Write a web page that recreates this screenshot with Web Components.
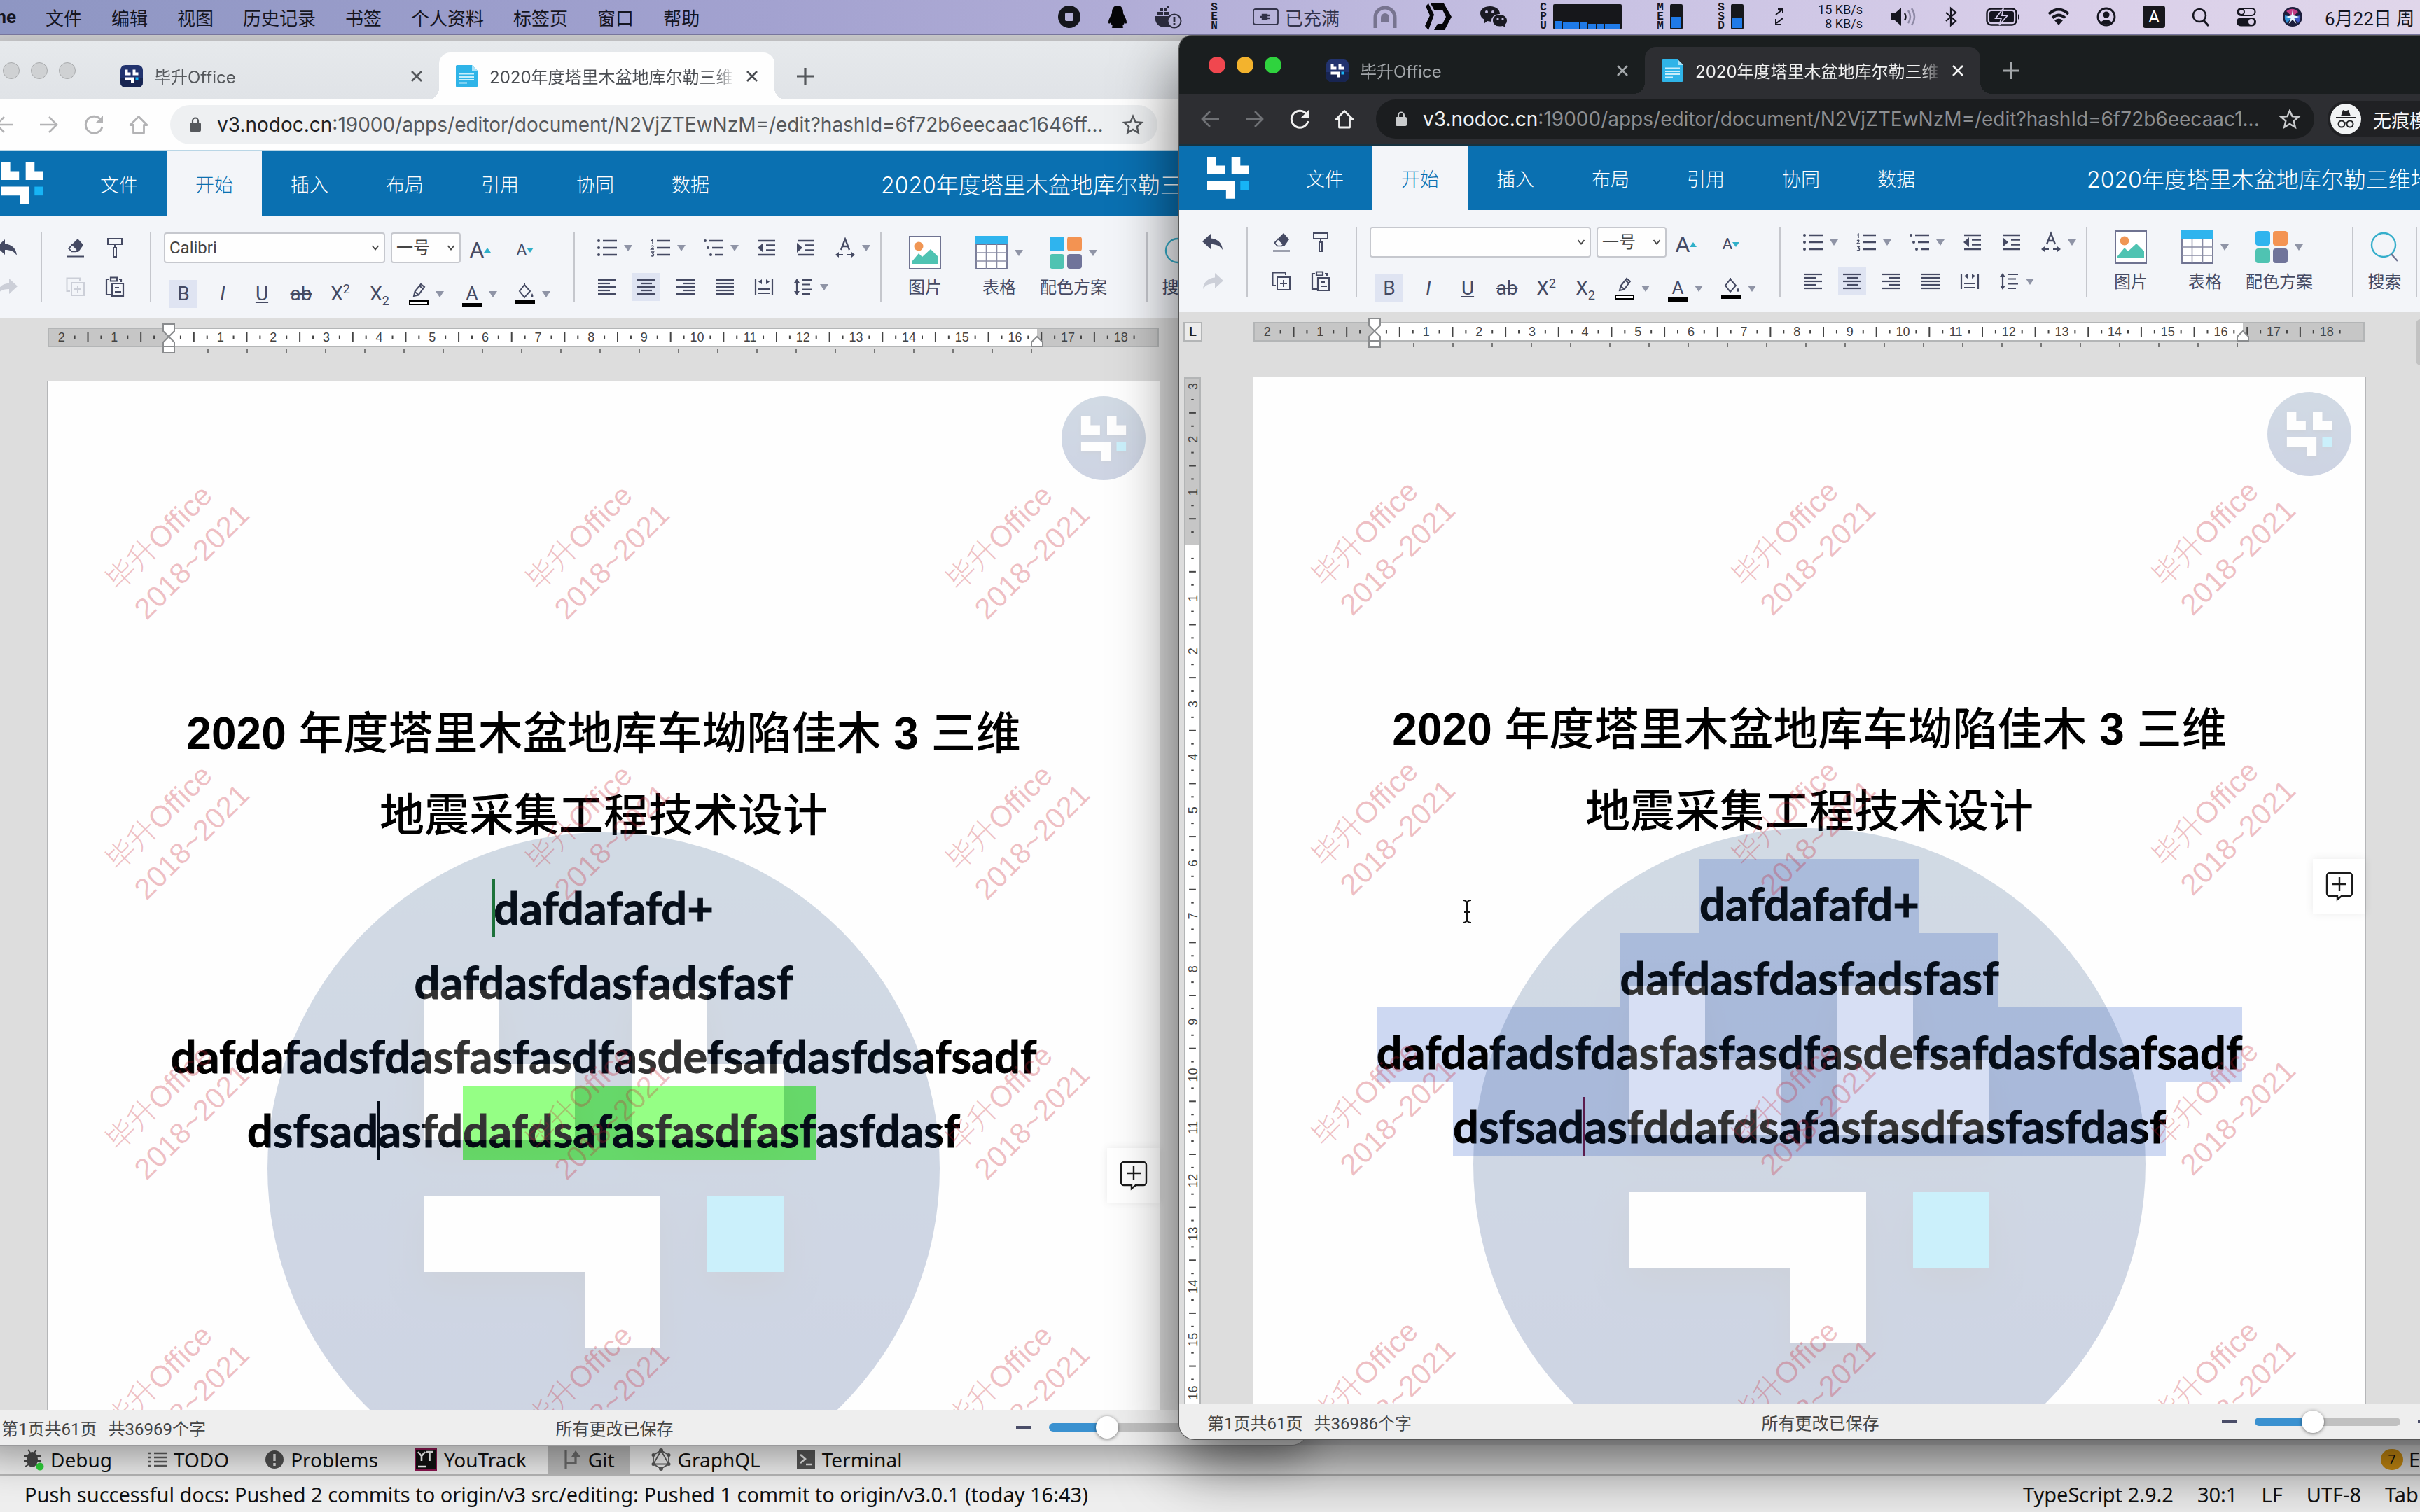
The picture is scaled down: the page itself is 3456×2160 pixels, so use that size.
<!DOCTYPE html>
<html lang="zh-CN">
<head>
<meta charset="utf-8">
<title>毕升Office</title>
<style>
html,body{margin:0;height:100%;overflow:hidden}
body{font-family:Roboto,"Noto Sans CJK SC",sans-serif}
</style>
</head>
<body>
<mac-desktop>
  <mac-menubar slot="menu"></mac-menubar>
  <browser-window slot="windows" class="back" theme="light" rest=":19000/apps/editor/document/N2VjZTEwNzM=/edit?hashId=6f72b6eecaac1646ff...">
    <office-editor font="Calibri" words="共36969个字" nocopy>
      <doc-title><b>2020</b> 年度塔里木盆地库车坳陷佳木 <b>3</b> 三维<br>地震采集工程技术设计</doc-title>
      <doc-line><text-caret tone="green"></text-caret>dafdafafd+</doc-line>
      <doc-line>dafdasfdasfadsfasf</doc-line>
      <doc-line>dafdafadsfdasfasfasdfasdefsafdasfdsafsadf</doc-line>
      <doc-line>dsfsad<text-caret></text-caret>asfd<mark-run>dafdsafasfasdfasf</mark-run>asfdasf</doc-line>
    </office-editor>
  </browser-window>
  <browser-window slot="windows" class="front" theme="dark" rest=":19000/apps/editor/document/N2VjZTEwNzM=/edit?hashId=6f72b6eecaac1...">
    <office-editor font="" words="共36986个字" pointer>
      <doc-title><b>2020</b> 年度塔里木盆地库车坳陷佳木 <b>3</b> 三维<br>地震采集工程技术设计</doc-title>
      <doc-line selected>dafdafafd+</doc-line>
      <doc-line selected>dafdasfdasfadsfasf</doc-line>
      <doc-line selected>dafdafadsfdasfasfasdfasdefsafdasfdsafsadf</doc-line>
      <doc-line selected>dsfsad<text-caret tone="wine"></text-caret>asfddafdsafasfasdfasfasfdasf</doc-line>
    </office-editor>
  </browser-window>
  <ide-footer slot="footer"></ide-footer>
</mac-desktop>

<script>
const define = (name, html, setup) => {
  const t = document.createElement('template');
  t.innerHTML = html;
  customElements.define(name, class extends HTMLElement {
    connectedCallback() {
      if (this.shadowRoot) return;
      this.attachShadow({mode: 'open'}).append(t.content.cloneNode(true));
      if (setup) setup(this, this.shadowRoot);
    }
  });
};

/* ---------- icons: [width, height, markup] ---------- */
const LOGO = '<path fill="#fff" d="M0 0h108v106h108v108H0zM297 0h108v106h109v108H297zM0 295h338v216H230V403H0z"/>';
const S = 'fill="none" stroke="currentColor"';
const lines = (x, w) => w.map((v, i) => `<path d="M${x[i]} ${2 + i * 5}h${v}" ${S} stroke-width="2.200"/>`).join('');
const ICONS = {
  logo: [60, 60, `<svg viewBox="0 0 514 512" width="60" height="60">${LOGO}<path fill="#17b4f5" d="M405 295h109v108H405z"/></svg>`],
  favicon: [32, 32, `<rect width="32" height="32" rx="7" fill="#22336e"/><path d="M0 18h32v7a7 7 0 0 1-7 7H7a7 7 0 0 1-7-7z" fill="#182552"/><g transform="translate(6.5 6.5) scale(.037)">${LOGO}<path fill="#17b4f5" d="M405 295h109v108H405z"/></g>`],
  doc: [32, 32, '<path d="M2 0h21l8 8v22a2 2 0 0 1-2 2H2a2 2 0 0 1-2-2V2a2 2 0 0 1 2-2z" fill="#2fb4e8"/><path d="M23 0l8 8h-8z" fill="#a9e2f8"/><path d="M5 12.500h21M5 17h21M5 21h21M5 25.500h11" stroke="#c9eefb" stroke-width="1.800"/>'],
  close: [20, 20, `<path d="M3 3l14 14M17 3L3 17" ${S} stroke-width="2.600"/>`],
  plus: [24, 24, `<path d="M12 0v24M0 12h24" ${S} stroke-width="3.200"/>`],
  back: [28, 28, `<path d="M27 14H3M14 3L3 14l11 11" ${S} stroke-width="2.600"/>`],
  fwd: [28, 28, `<path d="M1 14h24M14 3l11 11-11 11" ${S} stroke-width="2.600"/>`],
  reload: [28, 28, `<path d="M24 7A12 12 0 1 0 26 17" ${S} stroke-width="3"/><path d="M27 1v11H16z" fill="currentColor"/>`],
  home: [28, 28, `<path d="M14 2.500L2 14.500h4.500V26h15V14.500H26z" ${S} stroke-width="2.800" stroke-linejoin="round"/>`],
  lock: [18, 22, `<rect x="1" y="8" width="16" height="13" rx="2" fill="currentColor"/><path d="M5 9V5.500a4 4 0 0 1 8 0V9" ${S} stroke-width="2.200"/>`],
  star: [30, 30, `<path d="M15 3l3.600 8.200 8.900.8-6.800 5.900 2.100 8.800L15 22l-7.800 4.700 2.100-8.800L2.500 12l8.900-.8z" ${S} stroke-width="2.400"/>`],
  incognito: [44, 44, '<circle cx="22" cy="22" r="22" fill="#f1f3f4"/><path d="M15 18l3-9 4 1.500L26 9l3 9z" fill="#202124"/><path d="M8 20h28" stroke="#202124" stroke-width="2"/><circle cx="16" cy="29" r="4.500" fill="none" stroke="#202124" stroke-width="2"/><circle cx="28" cy="29" r="4.500" fill="none" stroke="#202124" stroke-width="2"/><path d="M20 28q2-1.500 4 0" fill="none" stroke="#202124" stroke-width="2"/>'],
  undo: [30, 24, '<path d="M12 0v6.500c10 1 16 6 17 16.500-4-6-9-8-17-8V22L0 11z" fill="currentColor"/>'],
  redo: [30, 24, '<path d="M18 0v6.500C8 7.500 2 12.500 1 23c4-6 9-8 17-8V22l12-11z" fill="currentColor"/>'],
  eraser: [28, 28, `<path d="M17 1l8 9-7 10H8l-5-5z" fill="currentColor"/><path d="M9 9.500L4.500 15.200 8.500 19.500h6l2-2.500z" fill="#f3f5f9" stroke="currentColor" stroke-width="1.600"/><path d="M2 26.500h24" ${S} stroke-width="2"/>`],
  painter: [24, 30, `<path d="M2 2h20v8H2zM10 15h4v13h-4zM12 10v5" ${S} stroke-width="2"/>`],
  copy: [28, 28, `<path d="M20 5V1.500H1.500V20H6" ${S} stroke-width="2"/><path d="M8 8h18v18H8zM17 12v10M12 17h10" ${S} stroke-width="2"/>`],
  paste: [28, 30, `<path d="M6 4H2v22h7M20 4h3v4M8 1.500h9v5H8z" ${S} stroke-width="2.200"/><path d="M10 10h16v18H10zM14 16h6M14 22h9" ${S} stroke-width="2.200"/>`],
  up: [10, 7, '<path d="M5 0l5 7H0z" fill="#2fb0c9"/>'],
  down: [10, 7, '<path d="M0 0h10L5 7z" fill="#2fb0c9"/>'],
  arrow: [12, 9, '<path d="M0 0h12L6 9z" fill="#8f94a6"/>'],
  chev: [12, 10, '<path d="M1.500 2L6 7.500 10.500 2" fill="none" stroke="#444" stroke-width="1.800"/>'],
  pen: [28, 34, `<path d="M7 20l1.500-6.500L17 3l5 4-8.500 11.500zM8.500 14l5 4M15 5.500l5 4" ${S} stroke-width="2"/><path d="M1 27h26v5H1z" fill="#fff" stroke="#000" stroke-width="2"/>`],
  fill: [28, 34, `<path d="M13 4l8 9-8 9-7-9zM13 4v-2" ${S} stroke-width="2"/><path d="M24 16q3 5 0 6-3-1 0-6z" fill="currentColor"/><path d="M0 26h28v6H0z"/>`],
  ul: [28, 24, `<g fill="currentColor"><circle cx="2" cy="2" r="2"/><circle cx="2" cy="12" r="2"/><circle cx="2" cy="22" r="2"/></g><path d="M8 2h20M8 12h20M8 22h20" ${S} stroke-width="2.400"/>`],
  ol: [28, 26, `<path d="M1 3l2-1.500V7M1 11q2.500-2 3 0 0 1.500-3 4h4M1 19h3.500L3 21.500q2.500 1 1 3-2 1-3 0" ${S} stroke-width="1.400"/><path d="M9 3h19M9 13h19M9 23h19" ${S} stroke-width="2.400"/>`],
  ml: [28, 24, `<g fill="currentColor"><circle cx="2" cy="2" r="2"/><circle cx="6" cy="12" r="2"/><circle cx="10" cy="22" r="2"/></g><path d="M8 2h20M12 12h16M16 22h12" ${S} stroke-width="2.400"/>`],
  outdent: [26, 24, `<path d="M1 2h24M12 8.500h13M12 15.500h13M1 22h24" ${S} stroke-width="2.400"/><path d="M8 5v14L0 12z" fill="currentColor"/>`],
  indent: [26, 24, `<path d="M1 2h24M12 8.500h13M12 15.500h13M1 22h24" ${S} stroke-width="2.400"/><path d="M0 5v14l8-7z" fill="currentColor"/>`],
  scale: [28, 28, `<path d="M8 17L14 1.500 20 17M10 12h8" ${S} stroke-width="2.400"/><path d="M3 24h8M17 24h8" ${S} stroke-width="2"/><path d="M5 20v8l-5-4zM23 20v8l5-4z" fill="currentColor"/>`],
  al: [26, 24, lines([0, 0, 0, 0, 0], [26, 17, 26, 17, 26])],
  ac: [26, 24, lines([0, 5, 0, 5, 0], [26, 16, 26, 16, 26])],
  ar: [26, 24, lines([0, 9, 0, 9, 0], [26, 17, 26, 17, 26])],
  aj: [26, 24, lines([0, 0, 0, 0, 0], [26, 26, 26, 26, 26])],
  dist: [26, 24, `<path d="M1 1v22M25 1v22M5 15h16M5 21h16" ${S} stroke-width="2.200"/><path d="M10 1v7L5 4.500zM16 1v7l5-3.500z" fill="currentColor"/>`],
  spacing: [26, 24, `<path d="M12 2h14M12 8.500h11M12 15.500h14M12 22h11M4 3v18" ${S} stroke-width="2.200"/><path d="M0 6l4-6 4 6zM0 18l4 6 4-6z" fill="currentColor"/>`],
  picture: [46, 48, '<path d="M1 1h44v46H1z" fill="#fff" stroke="#6f7391" stroke-width="2"/><circle cx="14" cy="15" r="6.500" fill="#f09654"/><path d="M4 40V37l10-12 5 5L31 19l11 11v10z" fill="#4fc3b2"/>'],
  table: [46, 48, '<path d="M1 12h44v35H1z" fill="#fff" stroke="#6f7391" stroke-width="1.800"/><path d="M15.500 12v35M30.500 12v35M1 24h44M1 36h44" stroke="#8a8da5" stroke-width="1.600"/><path d="M0 0h46v12H0z" fill="#2fb4ee"/>'],
  colors: [46, 48, '<rect y="1" width="21" height="21" rx="4" fill="#2fb4ee"/><rect x="25" y="1" width="21" height="21" rx="4" fill="#f39352"/><rect y="26" width="21" height="21" rx="4" fill="#4fc3b2"/><rect x="25" y="26" width="21" height="21" rx="4" fill="#70749a"/>'],
  find: [42, 48, '<circle cx="19" cy="21" r="17" fill="none" stroke="#35aecb" stroke-width="2.400"/><path d="M30 34l9 10" stroke="#6f7391" stroke-width="2.400"/>'],
  comment: [40, 42, '<path d="M6 2h28a4 4 0 0 1 4 4v25a4 4 0 0 1-4 4H23l-6 5v-5H6a4 4 0 0 1-4-4V6a4 4 0 0 1 4-4z" fill="#fff" stroke="#1b1b1b" stroke-width="2.400"/><path d="M20 8v20M10 18h20" stroke="#1b1b1b" stroke-width="2.400"/>'],
  ibeam: [18, 36, '<path d="M3 2q6 0 6 5 0-5 6-5M9 6v24M3 34q6 0 6-5 0 5 6 5M5 19h8" fill="none" stroke="#111" stroke-width="2"/>'],
  /* menu bar */
  rec: [32, 32, '<circle cx="16" cy="16" r="16" fill="#15161c"/><rect x="10" y="10" width="12" height="12" rx="2" fill="#b4b0d6"/>'],
  qq: [26, 32, '<path d="M13 0c6 0 8 5 8 10 0 3 5 8 5 14 0 2-2 2-3 0-1 3-2 4-3 5 2 1 2 3-1 3h-12c-3 0-3-2-1-3-1-1-2-2-3-5-1 2-3 2-3 0 0-6 5-11 5-14C5 5 7 0 13 0z" fill="#050507"/>'],
  docker: [38, 34, '<g fill="#2a2a3c"><path d="M3 10h4v4H3zM8 10h4v4H8zM13 10h4v4h-4zM8 5h4v4H8zM13 5h4v4h-4zM18 10h3v4h-3zM17 1h3v4h-3z"/><path d="M0 16h20q5 0 7-3v16q-4 3-12 3-14 0-15-16z"/></g><circle cx="28" cy="23" r="9.500" fill="#b4b0d6" stroke="#2a2a3c" stroke-width="2"/><path d="M28 17v7M28 26v3" stroke="#2a2a3c" stroke-width="2.800"/>'],
  plug: [38, 24, `<rect x="1" y="1" width="35" height="22" rx="3" ${S} stroke-width="1.800"/><path d="M37 8q2 4 0 8z" fill="currentColor"/><path d="M14 9h6v6h-6zM10 12h5M20 10h4M20 14h4" fill="currentColor" stroke="currentColor" stroke-width="2.400"/>`],
  arch: [34, 32, '<path d="M3 32V17a14 14 0 0 1 28 0v15" fill="none" stroke="#77748f" stroke-width="5"/><path d="M11 24V17a6 6 0 0 1 12 0v7z" fill="#77748f"/>'],
  dd: [38, 38, '<path d="M1 4l4-4 8 16L5 38l-5-6 7-15zM8 0h19l11 19-10 19H13l5-9h7l5-10-5-10H13z" fill="#060608"/>'],
  wechat: [40, 32, '<path d="M15 1c9 0 14 5 14 11-8 0-13 5-12 11l-6-1-5 4 1-6C3 18 1 15 1 11 1 5 7 1 15 1z" fill="#1a1a22"/><path d="M29 13c6 0 10 4 10 8 0 3-1 5-3 6l1 4-4-2c-9 2-14-2-14-8 0-5 4-8 10-8z" fill="#1a1a22"/><g fill="#c3bde0"><circle cx="10" cy="9" r="2"/><circle cx="19" cy="9" r="2"/><circle cx="26" cy="19" r="1.600"/><circle cx="33" cy="19" r="1.600"/></g>'],
  cpu: [98, 36, '<rect width="98" height="36" rx="2" fill="#16171b"/><path d="M2 24h11v11H2zM14 26h11v9H14zM26 26h11v9H26zM38 26h11v9H38zM50 28h11v7H50zM62 28h11v7H62zM74 28h11v7H74zM86 28h10v7H86z" fill="#1f7ae8"/>'],
  mem: [18, 36, '<rect width="18" height="36" rx="2" fill="#16171b"/><path d="M2 18h14v16H2z" fill="#1f7ae8"/>'],
  ssd: [18, 36, '<rect width="18" height="36" rx="2" fill="#16171b"/><path d="M2 20h14v14H2z" fill="#1f7ae8"/>'],
  net: [14, 24, `<path d="M2 9L11 2M5 1h7v6M12 14l-9 7M2 15v8h7" ${S} stroke-width="2"/>`],
  vol: [36, 28, `<path d="M0 9h6l9-8v26l-9-8H0z" fill="currentColor"/><path d="M20 9q3 5 0 10" ${S} stroke-width="2.400"/><path d="M25 5q6 9 0 18M30 2q8 12 0 24" fill="none" stroke="#8f8aa6" stroke-width="2.400"/>`],
  bt: [20, 28, `<path d="M3 8l14 12-7 6V2l7 6L3 20" ${S} stroke-width="2.200"/>`],
  bat: [50, 26, `<rect x="1.500" y="1.500" width="42" height="23" rx="6" ${S} stroke-width="2.400"/><rect x="5" y="5" width="35" height="16" rx="3" fill="currentColor"/><path d="M46 9q4 4 0 8z" fill="currentColor"/><path d="M25 1L14 15h8l-3 10 12-14h-8z" fill="currentColor" stroke="#d3cae7" stroke-width="1.800"/>`],
  wifi: [32, 26, `<path d="M2 9q14-13 28 0M7 14.500q9-8 18 0" ${S} stroke-width="4"/><path d="M10 18q6-5 12 0l-6 7z" fill="currentColor"/>`],
  user: [28, 28, `<circle cx="14" cy="14" r="12" ${S} stroke-width="2.800"/><circle cx="14" cy="11" r="4.600" fill="currentColor"/><path d="M6 22q8-8 16 0-8 6-16 0z" fill="currentColor"/>`],
  mag: [26, 28, `<circle cx="11" cy="12" r="9" ${S} stroke-width="2.600"/><path d="M17 19l7 8" ${S} stroke-width="3"/>`],
  ctrl: [28, 28, `<rect x="1.500" y="2" width="25" height="10" rx="5" ${S} stroke-width="2.200"/><circle cx="7" cy="7" r="4" ${S} stroke-width="2"/><rect y="15" width="28" height="12.500" rx="6" fill="currentColor"/><circle cx="21" cy="21" r="4" fill="#dcd2ea"/>`],
  siri: [28, 28, '<circle cx="14" cy="14" r="14" fill="#1c1d3b"/><path d="M5 6q9-7 17 1l-8 7z" fill="#c23d86"/><path d="M3 12l11 2-8 9q-4-5-3-11z" fill="#2f8fd6"/><path d="M25 12l-11 2 8 9q4-5 3-11z" fill="#3c56c4"/><path d="M14 4l1.500 8 8 2-7 2 3 8-5.500-6-5.500 6 3-8-7-2 8-2z" fill="#eaf6ff"/>'],
  /* IDE */
  bug: [28, 32, '<g fill="none" stroke="#4a4a4a" stroke-width="2"><path d="M6 2l3 4M18 2l-3 4M0 11h24M0 18h24M2 26l5-3M22 26l-5-3"/></g><ellipse cx="12" cy="16" rx="8" ry="11" fill="#4a4a4a"/><circle cx="23" cy="26" r="5.500" fill="#2fd33a"/>'],
  todo: [26, 22, '<path d="M0 2h4M8 2h18M0 8h4M8 8h18M0 14h4M8 14h18M0 20h4M8 20h18" stroke="#5e5e5e" stroke-width="2.600"/>'],
  prob: [26, 26, '<circle cx="13" cy="13" r="13" fill="#505050"/><path d="M13 5v10M13 18v4" stroke="#ddd" stroke-width="3.400"/>'],
  yt: [32, 32, '<rect x="1" y="1" width="30" height="30" fill="#111" stroke="#8c1650" stroke-width="2"/><path d="M5 5l5 6 5-6M10 11v7M16 5h11M21.500 5v13M5 26h11" fill="none" stroke="#fff" stroke-width="2.600"/>'],
  git: [26, 28, '<path d="M4 1v26M4 19h14V8" fill="none" stroke="#6b6b6b" stroke-width="3.200"/><path d="M12 10l6-9 7 9z" fill="#6b6b6b"/>'],
  gql: [28, 32, '<g fill="none" stroke="#5a5a5a" stroke-width="1.800"><path d="M14 3l11 6.500v13L14 29 3 22.500v-13zM14 3L3 22.500h22z"/></g><g fill="#5a5a5a"><circle cx="14" cy="3" r="3"/><circle cx="25" cy="9.500" r="2.500"/><circle cx="25" cy="22.500" r="2.500"/><circle cx="14" cy="29" r="3"/><circle cx="3" cy="22.500" r="2.500"/><circle cx="3" cy="9.500" r="2.500"/></g>'],
  term: [26, 26, '<path d="M0 0h26v26H0z" fill="#555"/><path d="M5 6l7 6-7 6M13 20h9" fill="none" stroke="#e4e4e4" stroke-width="2.600"/>']
};
define('ui-icon', '<style>:host{display:inline-flex;flex:none}svg{display:block;overflow:visible}</style>', (el, root) => {
  const [w, h, body] = ICONS[el.getAttribute('name')];
  root.innerHTML += `<svg width="${w}" height="${h}" viewBox="0 0 ${w} ${h}" aria-hidden="true">${body}</svg>`;
});

/* ---------- desktop ---------- */
define('mac-desktop', `<style>
:host{display:flex;flex-direction:column;position:relative;height:100vh;overflow:hidden;background:#d6d6d8}
main{flex:1}
::slotted(.back),::slotted(.front){position:absolute;width:1905px}
::slotted(.back){left:-38px;top:59px;bottom:96px;--page-gap:91px;--note-top:1186px;box-shadow:0 0 0 1px #9a9a9c,0 16px 60px rgba(0,0,0,.4)}
::slotted(.front){left:1684px;top:51px;bottom:104px;--page-gap:93px;--note-top:781px;box-shadow:0 0 0 1px #555,0 36px 90px rgba(0,0,0,.6)}
</style><slot name="menu"></slot><main></main><slot name="footer"></slot><slot name="windows"></slot>`);

define('mac-menubar', `<style>
:host{display:block;flex:none;position:relative;z-index:2}
nav{display:flex;align-items:center;height:48px;font-size:26px;color:#15151f;border-bottom:2px solid #77759c;
 background:linear-gradient(90deg,#8e96c3 0%,#a3a2d0 32%,#b0acd6 46%,#c6c0e2 64%,#d8cee9 84%,#e0d6ea 100%)}
.app{width:23px;display:flex;justify-content:flex-end;overflow:hidden;font-weight:700}
ul{display:flex;gap:42px;margin:0;padding:0 0 0 42px;list-style:none}
.right{margin-left:auto;display:flex;gap:40px;align-items:center}
.v{display:flex;gap:7px;align-items:center}
.g{margin:0 4px}
.v span{font:700 16px/13px "Liberation Mono",monospace;width:14px;display:flex;flex-direction:column;align-items:center}
.charge{display:flex;align-items:center;gap:8px;padding:0 8px;color:#33334a}
.kb{font-size:18px;line-height:20px;text-align:right;width:72px}
.end{display:flex;gap:38px;align-items:center}
.a{width:32px;height:32px;border-radius:4px;background:#17171c;color:#fff;display:grid;place-items:center;font-size:24px}
time{width:136px;white-space:nowrap;overflow:hidden;margin-left:-6px}
</style><nav><span class="app">Chrome</span>
<ul><li>文件</li><li>编辑</li><li>视图</li><li>历史记录</li><li>书签</li><li>个人资料</li><li>标签页</li><li>窗口</li><li>帮助</li></ul>
<div class="right"><ui-icon name="rec"></ui-icon><ui-icon name="qq"></ui-icon><ui-icon name="docker"></ui-icon>
<div class="v"><span><b>S</b><b>E</b><b>N</b></span></div>
<div class="charge"><ui-icon name="plug"></ui-icon>已充满</div><ui-icon name="arch"></ui-icon><ui-icon name="dd"></ui-icon><ui-icon name="wechat"></ui-icon>
<div class="v g"><span><b>C</b><b>P</b><b>U</b></span><ui-icon name="cpu"></ui-icon></div>
<div class="v g"><span><b>M</b><b>E</b><b>M</b></span><ui-icon name="mem"></ui-icon></div>
<div class="v g"><span><b>S</b><b>S</b><b>D</b></span><ui-icon name="ssd"></ui-icon></div>
<ui-icon name="net"></ui-icon><div class="kb">15 KB/s<br>8 KB/s</div><ui-icon name="vol"></ui-icon><ui-icon name="bt"></ui-icon>
<div class="end"><ui-icon name="bat"></ui-icon><ui-icon name="wifi"></ui-icon><ui-icon name="user"></ui-icon><span class="a">A</span><ui-icon name="mag"></ui-icon><ui-icon name="ctrl"></ui-icon><ui-icon name="siri"></ui-icon><time>6月22日 周</time></div>
</div></nav>`);

/* ---------- browser ---------- */
define('browser-tab', `<style>
:host{display:flex;align-items:center;box-sizing:border-box;width:479px;height:67px;padding:0 22px 0 24px;position:relative;color:var(--tab-ink);font:24px Inter,"Noto Sans CJK SC",sans-serif}
:host([active]){background:var(--bar);border-radius:16px 16px 0 0;color:var(--tab-on)}
:host([active])::before,:host([active])::after{content:"";position:absolute;bottom:0;width:16px;height:16px}
:host([active])::before{left:-16px;background:radial-gradient(circle at 0 0,transparent 16px,var(--bar) 16px)}
:host([active])::after{right:-16px;background:radial-gradient(circle at 100% 0,transparent 16px,var(--bar) 16px)}
.t{flex:1;margin:0 8px 0 16px;white-space:nowrap;overflow:hidden;-webkit-mask:linear-gradient(90deg,#000 320px,transparent 352px);mask:linear-gradient(90deg,#000 320px,transparent 352px)}
button{border:0;background:none;padding:0;color:inherit;display:flex}
</style><slot name="icon"></slot><span class="t"><slot></slot></span><button aria-label="关闭"><ui-icon name="close"></ui-icon></button>`);

define('browser-window', `<style>
:host{display:flex;flex-direction:column;border-radius:18px 18px 22px 22px;overflow:hidden;
 --strip:linear-gradient(#e6e9ec,#e0e3e7);--bar:#fefefe;--pill:#eef0f2;--ink:#202124;--dim:#55585c;--nav:#b3b3b5;--nav2:#b3b3b5;--star:#55585c;--tab-ink:#55585c;--tab-on:#4a4d52;--line:#b9d6e6;--l1:#cfd1d3;--l2:#cfd1d3;--l3:#cfd1d3;--rim:#a9abad}
:host([theme=dark]){--strip:#1a1e1f;--bar:#2d2e32;--pill:#1b1d1f;--ink:#f1f1f1;--dim:#8c8e91;--nav:#6f7175;--nav2:#f0f0f0;--star:#c9cbcd;--tab-ink:#a3a7aa;--tab-on:#f1f1f1;--line:#17323f;--l1:#f0474f;--l2:#f3b32d;--l3:#2fd33e;--rim:transparent}
.strip{display:flex;align-items:center;height:83px;background:var(--strip);flex:none}
.lights{width:186px;box-sizing:border-box;padding-left:42px;display:flex;gap:16px}
.lights button{width:24px;height:24px;box-sizing:border-box;border-radius:50%;border:1px solid var(--rim);padding:0}
.tabs{display:flex;align-self:flex-end}
.add{align-self:flex-end;height:67px;align-items:center;margin-left:32px;color:var(--tab-ink);display:flex;border:0;background:none;padding:0}
.bar{display:flex;align-items:center;height:72px;flex:none;background:var(--bar);border-bottom:2px solid var(--line);padding-left:30px}
.nav{display:flex;gap:36px;color:var(--nav)}
.nav button,.pill button{display:flex;border:0;background:none;padding:0;color:inherit}
.nav button:nth-child(n+3){color:var(--nav2)}
.pill{flex:1;display:flex;align-items:center;height:56px;border-radius:28px;background:var(--pill);margin:0 214px 0 31px;padding:0 20px 0 27px;font:28px Inter,sans-serif;color:var(--dim);min-width:0}
:host([theme=dark]) .pill{margin-right:19px}
label{color:var(--ink);margin-left:22px}
input{flex:1;min-width:0;font:inherit;color:inherit;border:0;background:none;padding:0;outline:0}
.pill ui-icon{color:var(--star)}
.chip{display:none;align-items:center;gap:17px;width:265px;height:52px;border-radius:26px;box-sizing:border-box;padding-left:4px;background:#202124;color:#f5f5f5;font-size:26px}
:host([theme=dark]) .chip{display:flex}
</style>
<div class="strip"><div class="lights"><button aria-label="关闭" style="background:var(--l1)"></button><button aria-label="最小化" style="background:var(--l2)"></button><button aria-label="缩放" style="background:var(--l3)"></button></div>
<div class="tabs"><browser-tab><ui-icon slot="icon" name="favicon"></ui-icon>毕升Office</browser-tab><browser-tab active><ui-icon slot="icon" name="doc"></ui-icon>2020年度塔里木盆地库尔勒三维</browser-tab></div>
<button class="add" aria-label="新标签页"><ui-icon name="plus"></ui-icon></button></div>
<div class="bar"><div class="nav"><button aria-label="后退"><ui-icon name="back"></ui-icon></button><button aria-label="前进"><ui-icon name="fwd"></ui-icon></button><button aria-label="刷新"><ui-icon name="reload"></ui-icon></button><button aria-label="主页"><ui-icon name="home"></ui-icon></button></div>
<div class="pill"><ui-icon name="lock"></ui-icon><label for="u">v3.nodoc.cn</label><input id="u"><button aria-label="收藏"><ui-icon name="star"></ui-icon></button></div>
<div class="chip"><ui-icon name="incognito"></ui-icon>无痕模式</div></div>
<slot></slot>`, (el, root) => { root.querySelector('input').setAttribute('value', el.getAttribute('rest')); });

/* ---------- ribbon parts ---------- */
define('tool-button', `<style>
:host{display:inline-flex;align-items:center}
button{width:40px;height:40px;border:0;padding:0;background:none;color:inherit;display:flex;align-items:center;justify-content:center;font:28px/40px Roboto,sans-serif;white-space:nowrap}
:host([on]) button{background:#dfe4f2}
:host([off]) button{color:#cccfd8}
.m{display:none;margin:0 4px}
:host([menu]) .m{display:flex}
</style><button><slot></slot></button><span class="m"><ui-icon name="arrow"></ui-icon></span>`, (el, root) => {
  const i = el.getAttribute('icon');
  if (i) root.querySelector('button').innerHTML = `<ui-icon name="${i}"></ui-icon>`;
  root.querySelector('button').setAttribute('aria-label', el.getAttribute('label') || el.textContent || i);
});

define('big-tool', `<style>
:host{display:block;width:106px;flex:none}
button{width:100%;border:0;background:none;padding:5px 0 0;color:inherit;display:flex;flex-direction:column;align-items:center;font:24px/32px "Noto Sans CJK SC",sans-serif;gap:8px;white-space:nowrap}
span{display:flex;align-items:center;gap:10px}
.m{display:none}:host([menu]) .m{display:flex}
</style><button><span><slot name="icon"></slot><span class="m"><ui-icon name="arrow"></ui-icon></span></span><slot></slot></button>`);

define('font-select', `<style>
:host{display:inline-grid;height:44px}
select,.c{grid-area:1/1}
select{appearance:none;box-sizing:border-box;width:100%;height:44px;border:2px solid #c6c8ce;border-radius:4px;background:#fefefe;padding:0 6px;font:24px Roboto,"Noto Sans CJK SC",sans-serif;color:#444}
.c{align-self:center;justify-self:end;margin-right:8px;pointer-events:none;display:flex}
</style><select><option></option></select><span class="c"><ui-icon name="chev"></ui-icon></span>`, (el, root) => {
  root.querySelector('select').setAttribute('aria-label', el.getAttribute('label'));
  root.querySelector('option').textContent = el.getAttribute('value') || '';
});

define('office-ribbon', `<style>
:host{display:flex;flex:none;box-sizing:border-box;height:146px;padding:24px 0 22px;background:#f3f5f9;color:#454a63}
section{display:flex;height:100px;box-sizing:border-box;border-left:2px solid #c5c7cd;flex:none}
.undo{width:96px;border:0;flex-direction:column;align-items:center;padding-top:2px;gap:16px}
.clip{width:156px;padding:2px 0 0 28px;display:grid;grid-template-columns:40px 40px;gap:16px;align-content:start}
.font{width:605px;padding-left:18px;flex-direction:column;gap:24px}
.para{width:438px;padding:2px 0 0 26px;flex-direction:column;gap:16px}
.ins{width:380px;padding-left:9px}
.search{width:91px;justify-content:center}.search big-tool{width:90px}
.row{display:flex;gap:16px;height:40px}
.font .row:first-child{gap:8px;height:44px}
.font .row+.row{padding-left:8px}
.pair{display:flex;gap:24px;padding-top:6px}
font-select:first-child{width:316px}font-select{width:100px}
sup,sub{font-size:18px;line-height:0}
.big{font-size:32px}.sm{font-size:22px}
.bar{border-bottom:6px solid #000;width:28px;line-height:28px;font-size:26px;margin-top:4px;text-align:center}
</style>
<section class="undo"><tool-button icon="undo"></tool-button><tool-button icon="redo" off></tool-button></section>
<section class="clip"><tool-button icon="eraser"></tool-button><tool-button icon="painter"></tool-button><tool-button class="copy" icon="copy"></tool-button><tool-button icon="paste"></tool-button></section>
<section class="font"><div class="row"><font-select class="f" label="字体"></font-select><font-select label="字号" value="一号"></font-select>
<div class="pair"><tool-button label="增大字号"><span class="big">A</span><ui-icon name="up"></ui-icon></tool-button><tool-button label="减小字号"><span class="sm">A</span><ui-icon name="down"></ui-icon></tool-button></div></div>
<div class="row"><tool-button on>B</tool-button><tool-button><i>I</i></tool-button><tool-button><u>U</u></tool-button><tool-button label="删除线"><s>ab</s></tool-button><tool-button><span>X<sup>2</sup></span></tool-button><tool-button><span>X<sub>2</sub></span></tool-button>
<tool-button icon="pen" menu></tool-button><tool-button menu label="字体颜色"><span class="bar">A</span></tool-button><tool-button icon="fill" menu></tool-button></div></section>
<section class="para"><div class="row"><tool-button icon="ul" menu></tool-button><tool-button icon="ol" menu></tool-button><tool-button icon="ml" menu></tool-button><tool-button icon="outdent"></tool-button><tool-button icon="indent"></tool-button><tool-button icon="scale" menu></tool-button></div>
<div class="row"><tool-button icon="al"></tool-button><tool-button icon="ac" on></tool-button><tool-button icon="ar"></tool-button><tool-button icon="aj"></tool-button><tool-button icon="dist"></tool-button><tool-button icon="spacing" menu></tool-button></div></section>
<section class="ins"><big-tool><ui-icon slot="icon" name="picture"></ui-icon>图片</big-tool><big-tool menu><ui-icon slot="icon" name="table"></ui-icon>表格</big-tool><big-tool menu><ui-icon slot="icon" name="colors"></ui-icon>配色方案</big-tool></section>
<section class="search"><big-tool><ui-icon slot="icon" name="find"></ui-icon>搜索</big-tool></section><section></section>`, (el, root) => {
  root.querySelector('.f').shadowRoot.querySelector('option').textContent = el.getAttribute('font') || '';
  if (el.hasAttribute('nocopy')) root.querySelector('.copy').setAttribute('off', '');
});

/* ---------- rulers ---------- */
const CM = 75.65;
const scaleMarks = (from, to, put) => {
  for (let q = Math.ceil(from * 4); q <= to * 4; q++) {
    if (q === 0) continue;
    const n = Math.abs(q);
    put(q / 4 * CM, n % 4 === 0 ? n / 4 : null, n % 2 === 0 ? 14 : 5);
  }
};
define('h-ruler', '<style>:host{display:block}svg{display:block;overflow:visible}text{font:18px "Liberation Sans",sans-serif;fill:#444}</style>', (el, root) => {
  let m = '';
  scaleMarks(-2.24, 18.3, (p, n, h) => {
    m += n !== null ? `<text x="${171 + p}" y="20" text-anchor="middle">${n}</text>` : `<path d="M${171 + p} ${14 - h / 2}v${h}" stroke="#444" stroke-width="2"/>`;
  });
  for (let i = 1; i < 23; i++) m += `<path d="M${173 + i * 56} 30v6" stroke="#777" stroke-width="2"/>`;
  root.innerHTML += `<svg width="100%" height="40"><rect width="1587" height="28" fill="#c6c6c6"/><rect x="173" width="1240" height="28" fill="#fff"/><path d="M0 1h1587M0 27h1587M1 0v28M1586 0v28" stroke="#b3b5b6" stroke-width="2"/>${m}
  <g fill="#fff" stroke="#8a8c8e" stroke-width="2"><path d="M165-5h16V5l-8 8-8-8zM165 27v-6l8-8 8 8v6zM165 27h16v9h-16zM1405 27v-6l8-8 8 8v6z"/></g></svg>`;
});
define('v-ruler', '<style>:host{display:block;overflow:hidden}svg{display:block}text{font:18px "Liberation Sans",sans-serif;fill:#444}</style>', (el, root) => {
  let m = '';
  scaleMarks(-3.05, 16.2, (p, n, h) => {
    const y = 240 + p;
    m += n !== null ? `<text transform="translate(19 ${y}) rotate(-90)" text-anchor="middle">${n}</text>` : `<path d="M${12 - h * .35} ${y}h${h * .7}" stroke="#444" stroke-width="2"/>`;
  });
  root.innerHTML += `<svg width="24" height="1480"><rect width="24" height="240" fill="#c6c6c6"/><rect y="240" width="24" height="1240" fill="#fff"/><path d="M1 0v1480M23 0v1480M0 1h24" stroke="#b3b5b6" stroke-width="2"/>${m}</svg>`;
});

/* ---------- document content ---------- */
define('doc-title', `<style>:host{display:block;text-align:center;font:500 64px/117px "Liberation Sans","Noto Sans CJK SC",sans-serif;color:#000;white-space:nowrap;margin-bottom:9px}::slotted(b){font-weight:700}</style><slot></slot>`);
define('doc-line', `<style>:host{display:block;text-align:center;height:106px;font:700 65px/86px Lato,sans-serif;color:#000;white-space:nowrap;-webkit-text-stroke:1px currentColor}
span{display:inline-block;padding-top:20px;height:86px;vertical-align:top}:host([selected]) span{background:#cdd8f2}</style><span><slot></slot></span>`);
define('mark-run', `<style>:host{display:inline-block;margin-top:-20px;padding-top:20px;background:#7aff66}</style><slot></slot>`);
define('text-caret', `<style>:host{display:inline-block;position:relative;width:0;height:0;color:#000}:host([tone=green]){color:#1d7d2a}:host([tone=wine]){color:#6d1340}
:host::before{content:"";position:absolute;left:-2px;bottom:-18px;width:4px;height:84px;background:currentColor}</style>`);

define('page-seal', `<style>:host{display:block}svg{display:block;width:100%;height:100%;opacity:.2}</style>
<svg viewBox="0 0 960 960"><defs><linearGradient id="g" x2="0" y2="1"><stop stop-color="#255082"/><stop offset="1" stop-color="#11307c"/></linearGradient></defs>
<circle cx="480" cy="480" r="480" fill="url(#g)"/><g transform="translate(223 225)" style="filter:drop-shadow(0 20px 24px rgba(0,0,0,.35))">${LOGO}<path fill="#05bdf2" d="M405 295h109v108H405z"/></g></svg>`);

define('doc-page', `<style>
:host{display:block;position:relative;box-sizing:border-box;background:#fefefe;box-shadow:0 0 0 1px #b5b6b8;padding-top:445px;height:1480px}
.over{position:absolute;inset:0;pointer-events:none;overflow:hidden}
.small{position:absolute;right:20px;top:21px;width:120px;height:120px}
.large{position:absolute;left:314px;top:644px;width:960px;height:960px}
.marks{position:absolute;left:-114px;top:37px;display:grid;grid-template-columns:repeat(3,600px);grid-auto-rows:400px;place-items:center}
.marks p{margin:0;transform:rotate(-45deg);font:300 42px/57px "Liberation Sans","Noto Sans CJK SC",sans-serif;color:rgba(200,30,50,.28);white-space:nowrap}
</style><slot></slot><div class="over"><page-seal class="small"></page-seal><page-seal class="large"></page-seal><div class="marks"></div></div>`, (el, root) => {
  root.querySelector('.marks').innerHTML = '<p>毕升Office<br>2018~2021</p>'.repeat(12);
});

define('office-editor', `<style>
:host{display:flex;flex-direction:column;flex:1;min-height:0}
header{display:flex;align-items:center;height:92px;flex:none;background:#0a70b1;color:#fff;padding-left:40px;font:300 27px Inter,"Noto Sans CJK SC",sans-serif}
nav{display:flex;margin-left:40px;height:100%}
nav a{width:136px;display:grid;place-items:center;color:#fff;text-decoration:none}
nav a.on{background:#f3f5f9;color:#0a70b1}
h1{margin:0 0 0 204px;font-weight:300;font-size:32px;white-space:nowrap;overflow:hidden}
.work{flex:1;min-height:0;overflow:hidden;position:relative;display:grid;grid-template-columns:106px 1588px 1fr;grid-template-rows:var(--page-gap) 1fr;background:#dddddd}
.corner{width:27px;height:28px;margin:14px 0 0 6px;box-sizing:border-box;border:2px solid #b3b5b6;background:#ececec;display:grid;place-items:center;font:700 18px/20px "Liberation Sans",sans-serif;color:#222}
h-ruler{margin-top:14px}
v-ruler{margin-left:7px;width:24px}
.note{position:absolute;left:1619px;top:var(--note-top);width:75px;height:78px;border:0;padding:0;background:#fff;box-shadow:0 0 12px rgba(0,0,0,.08);display:grid;place-items:center}
.thumb{position:absolute;right:125px;top:10px;width:14px;height:66px;border-radius:7px;background:#c2c2c2}
.ibeam{position:absolute;left:402px;top:838px;display:none}
:host([pointer]) .ibeam{display:block}
footer{position:relative;height:50px;flex:none;background:#eeeeee;display:grid;grid-template-columns:1fr auto 1fr;align-items:center;font-size:24px;color:#444;padding:0 114px 0 40px}
.l{display:flex;gap:16px}
.z{display:flex;align-items:center;justify-content:flex-end;gap:25px}
.z button{border:0;padding:0;width:22px;height:22px;background:linear-gradient(#4a4d68,#4a4d68) center/22px 4px no-repeat}
.z .p{background:linear-gradient(#4a4d68,#4a4d68) center/22px 4px no-repeat,linear-gradient(#4a4d68,#4a4d68) center/4px 22px no-repeat}
input{appearance:none;margin:0;width:208px;height:12px;border-radius:6px;background:linear-gradient(90deg,#3a91d0 40%,#c0c0c0 40%)}
input::-webkit-slider-thumb{appearance:none;width:32px;height:32px;border-radius:50%;background:#fff;box-shadow:0 1px 5px rgba(0,0,0,.5)}
</style>
<header><ui-icon name="logo"></ui-icon><nav><a href="#">文件</a><a href="#" class="on">开始</a><a href="#">插入</a><a href="#">布局</a><a href="#">引用</a><a href="#">协同</a><a href="#">数据</a></nav><h1>2020年度塔里木盆地库尔勒三维地</h1></header>
<office-ribbon></office-ribbon>
<div class="work"><div class="corner">L</div><h-ruler></h-ruler><div></div><v-ruler></v-ruler><doc-page><slot></slot></doc-page>
<button class="note" aria-label="批注"><ui-icon name="comment"></ui-icon></button><div class="thumb"></div><ui-icon class="ibeam" name="ibeam"></ui-icon></div>
<footer><div class="l"><span>第1页共61页</span><span class="w"></span></div><span>所有更改已保存</span><div class="z"><button aria-label="缩小"></button><input type="range" min="0" max="100" value="38" aria-label="缩放"><button class="p" aria-label="放大"></button></div></footer>`, (el, root) => {
  root.querySelector('.w').textContent = el.getAttribute('words');
  const r = root.querySelector('office-ribbon'), n = document.createElement('office-ribbon');
  n.setAttribute('font', el.getAttribute('font'));
  if (el.hasAttribute('nocopy')) n.setAttribute('nocopy', '');
  r.replaceWith(n);
});

/* ---------- IDE ---------- */
define('ide-tab', `<style>:host{display:flex;align-items:center;height:42px;gap:10px;padding:0 22px;font-size:28px;white-space:nowrap}:host([on]){background:#b9b9b9}button{border:0;background:none;padding:0;font:inherit;color:inherit}</style><slot name="icon"></slot><button><slot></slot></button>`);
define('ide-footer', `<style>
:host{display:block;flex:none;background:#eeeeee;color:#111;font:29px/40px "Noto Sans","Noto Sans CJK SC",sans-serif}
.tools{display:flex;height:42px;border-bottom:3px solid #b9b9b9;padding-left:12px;gap:8px}
.events{margin-left:auto;display:flex;align-items:center;gap:8px;width:56px;overflow:hidden}
.n{flex:none;width:32px;height:30px;border-radius:15px;background:#e09b12;font-size:20px;line-height:30px;text-align:center}
.status{display:flex;align-items:center;height:51px;padding-left:35px;white-space:nowrap}
.info{margin-left:auto;display:flex;gap:34px}
.info span:last-child{width:50px;overflow:hidden}
</style>
<div class="tools"><ide-tab><ui-icon slot="icon" name="bug"></ui-icon>Debug</ide-tab><ide-tab><ui-icon slot="icon" name="todo"></ui-icon>TODO</ide-tab><ide-tab><ui-icon slot="icon" name="prob"></ui-icon>Problems</ide-tab><ide-tab><ui-icon slot="icon" name="yt"></ui-icon>YouTrack</ide-tab><ide-tab on><ui-icon slot="icon" name="git"></ui-icon>Git</ide-tab><ide-tab><ui-icon slot="icon" name="gql"></ui-icon>GraphQL</ide-tab><ide-tab><ui-icon slot="icon" name="term"></ui-icon>Terminal</ide-tab><div class="events"><span class="n">7</span>E</div></div>
<div class="status"><span>Push successful docs: Pushed 2 commits to origin/v3 src/editing: Pushed 1 commit to origin/v3.0.1 (today 16:43)</span><div class="info"><span>TypeScript 2.9.2</span><span>30:1</span><span>LF</span><span>UTF-8</span><span>Tab</span></div></div>`);
</script>
</body>
</html>
